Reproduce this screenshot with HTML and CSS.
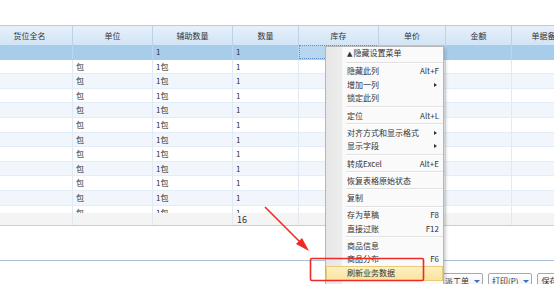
FILE: index.html
```html
<!DOCTYPE html>
<html>
<head>
    <meta charset="UTF-8">
    <title>单据明细</title>
    <link rel="stylesheet" href="styles.css">
</head>
<body>
    <div class="page">
        <!-- Grid -->
        <div class="grid">
            <div class="row head">
                <div class="cell">货位全名</div>
                <div class="cell">单位</div>
                <div class="cell">辅助数量</div>
                <div class="cell">数量</div>
                <div class="cell">库存</div>
                <div class="cell">单价</div>
                <div class="cell">金额</div>
                <div class="cell">单据备注</div>
            </div>
            <div class="grid-body">
                <div class="row selected">
                    <div class="cell"></div>
                    <div class="cell"></div>
                    <div class="cell">1</div>
                    <div class="cell">1</div>
                    <div class="cell focus"></div>
                    <div class="cell"></div>
                    <div class="cell"></div>
                    <div class="cell"></div>
                </div>
                <div class="row"><div class="cell"></div><div class="cell">包</div><div class="cell">1包</div><div class="cell">1</div><div class="cell"></div><div class="cell"></div><div class="cell"></div><div class="cell"></div></div>
                <div class="row alt"><div class="cell"></div><div class="cell">包</div><div class="cell">1包</div><div class="cell">1</div><div class="cell"></div><div class="cell"></div><div class="cell"></div><div class="cell"></div></div>
                <div class="row"><div class="cell"></div><div class="cell">包</div><div class="cell">1包</div><div class="cell">1</div><div class="cell"></div><div class="cell"></div><div class="cell"></div><div class="cell"></div></div>
                <div class="row alt"><div class="cell"></div><div class="cell">包</div><div class="cell">1包</div><div class="cell">1</div><div class="cell"></div><div class="cell"></div><div class="cell"></div><div class="cell"></div></div>
                <div class="row"><div class="cell"></div><div class="cell">包</div><div class="cell">1包</div><div class="cell">1</div><div class="cell"></div><div class="cell"></div><div class="cell"></div><div class="cell"></div></div>
                <div class="row alt"><div class="cell"></div><div class="cell">包</div><div class="cell">1包</div><div class="cell">1</div><div class="cell"></div><div class="cell"></div><div class="cell"></div><div class="cell"></div></div>
                <div class="row"><div class="cell"></div><div class="cell">包</div><div class="cell">1包</div><div class="cell">1</div><div class="cell"></div><div class="cell"></div><div class="cell"></div><div class="cell"></div></div>
                <div class="row alt"><div class="cell"></div><div class="cell">包</div><div class="cell">1包</div><div class="cell">1</div><div class="cell"></div><div class="cell"></div><div class="cell"></div><div class="cell"></div></div>
                <div class="row"><div class="cell"></div><div class="cell">包</div><div class="cell">1包</div><div class="cell">1</div><div class="cell"></div><div class="cell"></div><div class="cell"></div><div class="cell"></div></div>
                <div class="row alt"><div class="cell"></div><div class="cell">包</div><div class="cell">1包</div><div class="cell">1</div><div class="cell"></div><div class="cell"></div><div class="cell"></div><div class="cell"></div></div>
                <div class="row"><div class="cell"></div><div class="cell">包</div><div class="cell">1包</div><div class="cell">1</div><div class="cell"></div><div class="cell"></div><div class="cell"></div><div class="cell"></div></div>
            </div>
            <div class="row total">
                <div class="cell"></div>
                <div class="cell"></div>
                <div class="cell"></div>
                <div class="cell">16</div>
                <div class="cell"></div>
                <div class="cell"></div>
                <div class="cell"></div>
                <div class="cell"></div>
            </div>
        </div>

        <div class="spacer"></div>

        <!-- Bottom toolbar -->
        <div class="toolbar">
            <div class="btn first">派工单<span class="caret"></span></div>
            <div class="btn">打印(P)<span class="caret"></span></div>
            <div class="btn">保存(S)</div>
        </div>
    </div>

    <!-- Context menu -->
    <div class="menu">
        <div class="item"><span><span class="up">▲</span>隐藏设置菜单</span></div>
        <div class="sep"></div>
        <div class="item"><span>隐藏此列</span><span>Alt+F</span></div>
        <div class="item"><span>增加一列</span><span class="sub"></span></div>
        <div class="item"><span>锁定此列</span></div>
        <div class="sep"></div>
        <div class="item"><span>定位</span><span>Alt+L</span></div>
        <div class="sep"></div>
        <div class="item"><span>对齐方式和显示格式</span><span class="sub"></span></div>
        <div class="item"><span>显示字段</span><span class="sub"></span></div>
        <div class="sep"></div>
        <div class="item"><span>转成Excel</span><span>Alt+E</span></div>
        <div class="sep"></div>
        <div class="item"><span>恢复表格原始状态</span></div>
        <div class="sep"></div>
        <div class="item"><span>复制</span></div>
        <div class="sep"></div>
        <div class="item"><span>存为草稿</span><span>F8</span></div>
        <div class="item"><span>直接过账</span><span>F12</span></div>
        <div class="sep"></div>
        <div class="item"><span>商品信息</span></div>
        <div class="item"><span>商品分布</span><span>F6</span></div>
        <div class="item hover"><span>刷新业务数据</span></div>
    </div>

    <!-- Annotation: arrow and box -->
    <svg class="mark" width="554" height="284" viewBox="0 0 554 284">
        <line x1="265" y1="207" x2="302" y2="244" stroke="#ee2a24" stroke-width="1.6"/>
        <polygon points="309,251 296,244 302,238" fill="#ee2a24"/>
        <rect x="310.5" y="258.5" width="113" height="22" rx="1.5" fill="none" stroke="#ee2a24" stroke-width="1.6"/>
    </svg>
</body>
</html>
```

FILE: styles.css
```css
body {
    margin: 0;
    width: 554px;
    height: 284px;
    overflow: hidden;
    position: relative;
    background-color: #fff;
    font-family: "Noto Sans CJK SC", "Noto Sans", sans-serif;
    font-size: 8px;
    color: #333;
}
.page {
    padding-top: 25px;
}
.grid {
    margin-left: -13px;
    width: 597px;
}
.row {
    display: grid;
    grid-template-columns: 86px 80px 80px 66px 80px 67px 66px 72px;
    height: 14.6px;
    line-height: 14px;
    background-color: #fff;
    border-bottom: 1px solid #e3edf7;
    box-sizing: border-box;
}
.row.alt {
    background-color: #f0f6fc;
}
.cell {
    border-right: 1px solid #dfeaf5;
    padding-left: 3px;
    white-space: nowrap;
    overflow: hidden;
}
.row.head {
    height: 20px;
    line-height: 19px;
    border-top: 1px solid #b9cde1;
    border-bottom: none;
    background: linear-gradient(#e6f0fa, #d2e4f5);
}
.row.head .cell {
    text-align: center;
    padding-left: 0;
    border-right: 1px solid #bcd2e8;
}
.grid-body {
    height: 168px;
    overflow: hidden;
}
.row.selected {
    background-color: #a8cdeb;
    border-bottom: 1px solid #a8cdeb;
}
.row.selected .cell {
    border-right-color: #b9d7f0;
}
.cell.focus {
    background-color: #b7d6f0;
    border: 1px dotted #5d93c6;
}
.row.total {
    height: 13px;
    line-height: 13px;
    background-color: #f4f4f4;
    border-bottom: 1px solid #c3d1de;
    font-size: 9px;
}
.row.total .cell {
    border-right-color: #e2e8ee;
    padding-left: 4px;
}
.spacer {
    height: 34px;
}
.toolbar {
    border-top: 1px solid #a9c0d5;
    height: 24px;
    display: flex;
    gap: 5px;
    padding: 12px 0 0 420px;
    box-sizing: border-box;
    width: 640px;
}
.btn {
    flex: none;
    height: 16px;
    line-height: 14px;
    padding: 0 2px 0 3px;
    border: 1px solid #a9a9a9;
    border-radius: 2px;
    background: linear-gradient(#ffffff, #ececec);
    white-space: nowrap;
}
.btn.first {
    padding-left: 24px;
}
.caret {
    display: inline-block;
    width: 0;
    height: 0;
    margin-left: 5px;
    vertical-align: middle;
    border-left: 3px solid transparent;
    border-right: 3px solid transparent;
    border-top: 3px solid #3b6fbf;
}
.menu {
    position: absolute;
    left: 325px;
    top: 46px;
    width: 119px;
    height: 250px;
    box-sizing: border-box;
    border: 1px solid #b7b7b7;
    background: linear-gradient(to right, #e6e6e6 0, #ededed 16px, #f6f6f6 16px, #fafafa 17px);
    box-shadow: 2px 2px 3px rgba(0,0,0,0.18);
}
.item {
    display: flex;
    justify-content: space-between;
    align-items: center;
    height: 13.6px;
    line-height: 13.6px;
    padding: 0 4px 0 21px;
    white-space: nowrap;
}
.item .up {
    font-family: "DejaVu Sans", sans-serif;
    font-size: 7px;
    margin-right: 1px;
}
.sub {
    width: 0;
    height: 0;
    margin-right: 2px;
    border-top: 2.5px solid transparent;
    border-bottom: 2.5px solid transparent;
    border-left: 3px solid #333;
}
.sep {
    height: 3.6px;
    margin-left: 20px;
    background: linear-gradient(transparent 1.2px, #e1e1e1 1.2px, #e1e1e1 2.3px, #fff 2.3px, #fff 3.1px, transparent 3.1px);
}
.item.hover {
    padding-left: 20px;
    background: linear-gradient(#fdf0c0, #f9e3a0);
    border: 1px solid #e7cb78;
    height: 12.6px;
    line-height: 12px;
}
.mark {
    position: absolute;
    left: 0;
    top: 0;
    pointer-events: none;
}
```
